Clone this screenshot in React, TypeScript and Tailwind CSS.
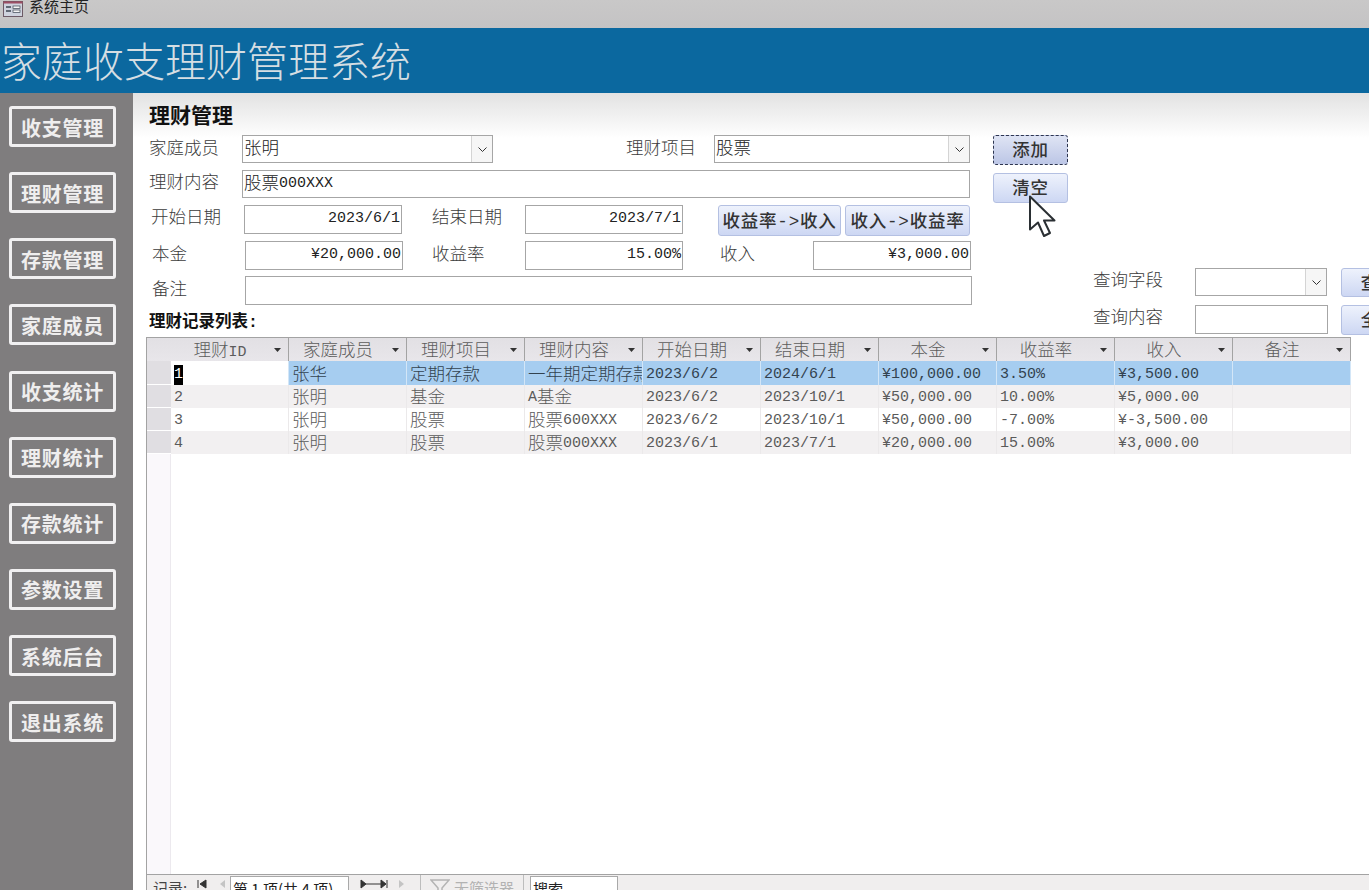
import React from 'react';

const menus = ['收支管理', '理财管理', '存款管理', '家庭成员', '收支统计', '理财统计', '存款统计', '参数设置', '系统后台', '退出系统'];
const columns = ['理财ID', '家庭成员', '理财项目', '理财内容', '开始日期', '结束日期', '本金', '收益率', '收入', '备注'];
const rows = [
  ['1', '张华', '定期存款', '一年期定期存款', '2023/6/2', '2024/6/1', '¥100,000.00', '3.50%', '¥3,500.00', ''],
  ['2', '张明', '基金', 'A基金', '2023/6/2', '2023/10/1', '¥50,000.00', '10.00%', '¥5,000.00', ''],
  ['3', '张明', '股票', '股票600XXX', '2023/6/2', '2023/10/1', '¥50,000.00', '-7.00%', '¥-3,500.00', ''],
  ['4', '张明', '股票', '股票000XXX', '2023/6/1', '2023/7/1', '¥20,000.00', '15.00%', '¥3,000.00', ''],
];

// the screenshot's font has half width latin, so latin and CJK get their own size
const T = ({ children }: { children: string }) => (
  <>
    {children.split(/([\x00-\x7f¥]+)/).filter(Boolean).map((part, i) =>
      /^[\x00-\x7f¥]+$/.test(part)
        ? <span key={i} className="text-[15px]">{part}</span>
        : <span key={i} className="text-[17.5px]">{part}</span>
    )}
  </>
);

const Label = ({ text, width }: { text: string; width: string }) => (
  <div className={`${width} shrink-0 text-[#3c3c3c] leading-[26px] font-light`}><T>{text}</T></div>
);

const Input = ({ value = '', width, right }: { value?: string; width: string; right?: boolean }) => (
  <div className={`${width} h-full shrink-0 border border-[#a6a6a6] bg-white flex items-center px-[1px] text-[#222] font-light whitespace-nowrap ${right ? 'justify-end' : ''}`}>
    <T>{value}</T>
  </div>
);

const Combo = ({ value = '', width }: { value?: string; width: string }) => (
  <div className={`${width} h-full shrink-0 border border-[#a6a6a6] bg-white flex items-center pl-[1px] text-[#222] font-light`}>
    <div className="flex-1"><T>{value}</T></div>
    <div className="w-[21px] h-full bg-[#f6f6f6] border-l border-[#d4d4d4] flex items-center justify-center">
      <svg width="9" height="5" viewBox="0 0 9 5"><path d="M0.5 0.5l4 4 4-4" fill="none" stroke="#333" strokeWidth="1" /></svg>
    </div>
  </div>
);

const BlueButton = ({ text, width, height, dotted }: { text: string; width: string; height: string; dotted?: boolean }) => (
  <button className={`${width} ${height} shrink-0 rounded-[3px] text-[#333] font-medium text-[17.5px] tracking-[0.8px] whitespace-nowrap flex items-center justify-center pt-[3px] ${dotted ? 'border border-dashed border-[#2e3650] bg-gradient-to-b from-[#dfe4f4] to-[#bcc6e6]' : 'border border-[#b4c0e2] bg-gradient-to-b from-[#eef2fc] to-[#cdd7f3]'}`}>
    {text}
  </button>
);

const HeaderCell = ({ text }: { text: string }) => (
  <div className="w-[118px] shrink-0 flex items-center border-r border-[#a3a3a3] text-[#5c5c5c] font-light">
    <div className="flex-1 text-center pl-[3px] pt-[3px]"><T>{text}</T></div>
    <div className="w-[22px] flex justify-center">
      <svg width="7" height="4" viewBox="0 0 7 4"><path d="M0 0h7L3.5 4z" fill="#333" /></svg>
    </div>
  </div>
);

export default function App() {
  return (
    <div className="relative w-[1369px] h-[890px] overflow-hidden flex flex-col bg-white font-['Liberation_Mono','Noto_Sans_CJK_SC',monospace]">
      <div className="h-[28px] shrink-0 bg-gradient-to-b from-[#c9c8c8] to-[#c4c3c4] flex items-start pl-[3px] pt-[1px] gap-[6px]">
        <svg width="20" height="16" viewBox="0 0 20 16">
          <rect x="0.5" y="0.5" width="19" height="15" fill="#cfd3de" stroke="#6c5a66" />
          <rect x="0.5" y="0.5" width="19" height="2" fill="#9c4d63" />
          <path d="M3 6h5M3 10h5" stroke="#3d4552" strokeWidth="1.4" />
          <rect x="10" y="5" width="7" height="2.5" fill="#f4f4f4" stroke="#3d4552" strokeWidth="0.7" />
          <rect x="10" y="9" width="7" height="2.5" fill="#f4f4f4" stroke="#3d4552" strokeWidth="0.7" />
        </svg>
        <span className="text-[15px] leading-[15px] text-[#222]">系统主页</span>
      </div>

      <div className="h-[65px] shrink-0 bg-[#0b689f] flex items-center pl-[1px] pt-[12px]">
        <h1 className="text-[41px] leading-none font-light text-[#d5dee3] whitespace-nowrap">家庭收支理财管理系统</h1>
      </div>

      <div className="flex-1 flex min-h-0">
        <nav className="w-[133px] shrink-0 bg-[#7f7d7e] flex flex-col gap-[25.15px] pt-[13px] pl-[9px]">
          {menus.map(m => (
            <button key={m} className="w-[107px] h-[41px] shrink-0 border-[3px] border-[#f1f0f1] rounded-[3px] text-[20px] tracking-[0.75px] font-bold text-[#efeeee] flex items-center justify-center pt-[8px]">
              {m}
            </button>
          ))}
        </nav>

        <main className="flex-1 min-w-0 flex flex-col">
          <div className="h-[244px] shrink-0 flex pl-[16px] bg-gradient-to-b from-[#e2e2e2] to-white to-[45px]">
            <div className="w-[823px] shrink-0 flex flex-col">
              <div className="h-[42px] pt-[12px] text-[21px] leading-[26px] font-bold text-[#111]">理财管理</div>
              <div className="flex h-[28px]">
                <Label text="家庭成员" width="w-[93px] pt-[1px]" />
                <Combo value="张明" width="w-[251px]" />
                <div className="w-[133px] shrink-0" />
                <Label text="理财项目" width="w-[88px] pt-[1px]" />
                <Combo value="股票" width="w-[256px]" />
              </div>
              <div className="flex h-[28px] mt-[7px]">
                <Label text="理财内容" width="w-[93px]" />
                <Input value="股票000XXX" width="w-[728px]" />
              </div>
              <div className="flex h-[29px] mt-[7px] pl-[2px]">
                <Label text="开始日期" width="w-[93px]" />
                <Input value="2023/6/1" width="w-[158px]" right />
                <Label text="结束日期" width="w-[93px] ml-[30px]" />
                <Input value="2023/7/1" width="w-[158px]" right />
                <BlueButton text="收益率->收入" width="w-[123px] ml-[35px]" height="h-[31px]" />
                <BlueButton text="收入->收益率" width="w-[125px] ml-[4px]" height="h-[31px]" />
              </div>
              <div className="flex h-[29px] mt-[7px] pl-[3px]">
                <Label text="本金" width="w-[93px] pt-[1px]" />
                <Input value="¥20,000.00" width="w-[158px]" right />
                <Label text="收益率" width="w-[93px] ml-[29px] pt-[1px]" />
                <Input value="15.00%" width="w-[158px]" right />
                <Label text="收入" width="w-[93px] ml-[37px] pt-[1px]" />
                <Input value="¥3,000.00" width="w-[158px]" right />
              </div>
              <div className="flex h-[29px] mt-[6px] pl-[3px]">
                <Label text="备注" width="w-[93px] pt-[1px]" />
                <Input width="w-[727px]" />
              </div>
              <div className="mt-[8px] h-[20px] text-[16.5px] leading-[20px] font-bold text-[#111]">理财记录列表:</div>
            </div>

            <div className="ml-[21px] w-[75px] shrink-0 flex flex-col gap-[8px] pt-[42px]">
              <BlueButton text="添加" width="w-[75px]" height="h-[30px]" dotted />
              <BlueButton text="清空" width="w-[75px]" height="h-[30px]" />
            </div>

            <div className="ml-[25px] shrink-0 flex flex-col gap-[9px] pt-[175px]">
              <div className="flex h-[28px]">
                <Label text="查询字段" width="w-[102px]" />
                <Combo width="w-[132px]" />
                <BlueButton text="查询" width="w-[76px] ml-[14px]" height="h-[29px]" />
              </div>
              <div className="flex h-[29px]">
                <Label text="查询内容" width="w-[102px]" />
                <Input width="w-[133px]" />
                <BlueButton text="全部" width="w-[76px] ml-[13px]" height="h-[30px]" />
              </div>
            </div>
          </div>

          <div className="flex-1 min-h-0 ml-[13px] border-l border-[#a3a3a3] flex flex-col overflow-hidden relative">
            <div className="flex h-[24px] shrink-0 w-[1204px] border-t border-[#a3a3a3] bg-gradient-to-b from-[#e2e0e4] to-[#e8e6ea]">
              <div className="w-[24px] shrink-0" />
              {columns.map(c => <HeaderCell key={c} text={c} />)}
            </div>
            {rows.map((row, r) => (
              <div key={row[0]} className={`flex shrink-0 w-[1204px] ${r === 0 ? 'h-[24px] bg-[#a6cdf0] text-[#33424f]' : 'h-[23px] text-[#5a5a5a]'} ${r === 1 || r === 3 ? 'bg-[#f2f0f1]' : ''}`}>
                <div className="w-[24px] shrink-0 bg-[#e0dee2] border-b border-white" />
                {row.map((cell, c) => (
                  <div key={c} className={`w-[118px] shrink-0 overflow-hidden whitespace-nowrap pl-[3px] pt-[4px] flex items-center font-light border-r ${r === 0 ? 'border-[#d3e6f7]' : 'border-[#ebe9ea]'} ${r === 0 && c === 0 ? 'bg-white' : ''}`}>
                    {r === 0 && c === 0
                      ? <span className="bg-black text-white text-[15px] leading-[20px]">{cell}</span>
                      : <T>{cell}</T>}
                  </div>
                ))}
              </div>
            ))}
            <div className="flex-1 w-[24px] bg-[#faf8fb] border-r border-[#ece9ee]" />
          </div>

          <div className="h-[16px] shrink-0 ml-[13px] overflow-hidden border-t border-l border-[#a3a3a3] bg-[#f0eeee]">
            <div className="h-[26px] flex items-center pl-[6px] text-[15px] text-[#444] font-['Noto_Sans_CJK_SC','Liberation_Sans',sans-serif] whitespace-nowrap">
              <span className="w-[44px]">记录:</span>
              <svg width="10" height="10" viewBox="0 0 10 10" className="mb-[8px]"><path d="M1 1v8M9 1v8L3 5z" stroke="#333" fill="#333" strokeWidth="1" /></svg>
              <svg width="8" height="10" viewBox="0 0 8 10" className="ml-[12px] mb-[8px]"><path d="M6 1v8L1 5z" fill="#c4c4c4" /></svg>
              <div className="ml-[3px] w-[119px] h-[24px] border border-[#a9a9a9] bg-white pl-[2px] text-[#222] leading-[24px]">第 1 项(共 4 项)</div>
              <svg width="28" height="10" viewBox="0 0 28 10" className="ml-[11px] mb-[8px]"><path d="M1 1v8l5-4zM6 5h15M21 1v8l5-4zM27 1v8" stroke="#333" fill="#333" strokeWidth="1" /></svg>
              <svg width="8" height="10" viewBox="0 0 8 10" className="ml-[9px] mb-[8px]"><path d="M2 1v8l5-4z" fill="#c4c4c4" /></svg>
              <div className="ml-[15px] h-[26px] border-l border-[#bdbdbd]" />
              <svg width="20" height="18" viewBox="0 0 20 18" className="ml-[9px]"><path d="M1 1h18l-7 8v8l-4-3V9z" fill="none" stroke="#b4b4b4" strokeWidth="1.5" /></svg>
              <span className="ml-[4px] text-[#b2b2b2]">无筛选器</span>
              <div className="ml-[9px] h-[26px] border-l border-[#bdbdbd]" />
              <div className="ml-[6px] w-[88px] h-[24px] border border-[#a9a9a9] bg-white pl-[2px] text-[#222] leading-[24px]">搜索</div>
            </div>
          </div>
        </main>
      </div>

      {/* recorded mouse pointer over the form */}
      <svg width="30" height="46" viewBox="0 0 30 46" className="absolute left-[1028px] top-[195px] pointer-events-none">
        <path d="M2 1.5v33l8-7 6 13.5 6-3-6-12.5h10.5z" fill="#fff" stroke="#2a2f33" strokeWidth="2" strokeLinejoin="round" />
      </svg>
    </div>
  );
}
